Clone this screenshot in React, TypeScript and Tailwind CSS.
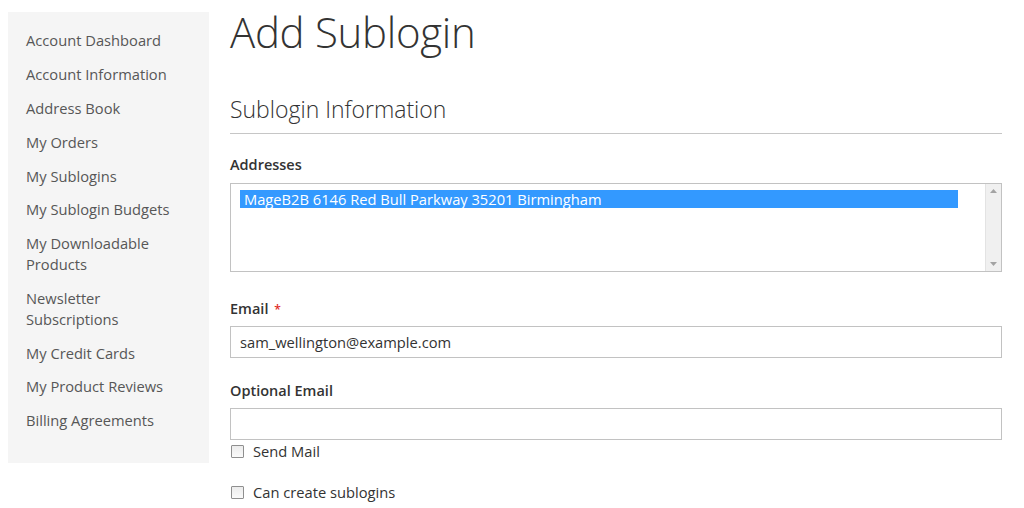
import React from "react";

const items: string[][] = [
  ["Account Dashboard"],
  ["Account Information"],
  ["Address Book"],
  ["My Orders"],
  ["My Sublogins"],
  ["My Sublogin Budgets"],
  ["My Downloadable", "Products"],
  ["Newsletter", "Subscriptions"],
  ["My Credit Cards"],
  ["My Product Reviews"],
  ["Billing Agreements"],
];

function Checkbox() {
  return (
    <span className="inline-block w-[13px] h-[13px] border border-[#8f8f8f] bg-gradient-to-b from-[#ececec] to-[#fafafa] rounded-[1px]" />
  );
}

export default function App() {
  return (
    <div
      className="w-[1024px] h-[508px] bg-white overflow-hidden flex text-[#333]"
      style={{ fontFamily: '"Open Sans", "Liberation Sans", sans-serif' }}
    >
      <div className="ml-[8px] mt-[12px] w-[201px] h-[451px] bg-[#f5f5f5] pt-[12px] pl-[18px] shrink-0">
        <ul className="flex flex-col">
          {items.map((it) => (
            <li key={it[0]} className="py-[6.4px] text-[14.7px] leading-[21px] text-[#575757]">
              {it.map((l) => (
                <div key={l}>{l}</div>
              ))}
            </li>
          ))}
        </ul>
      </div>
      <div className="ml-[21px] w-[772px] flex flex-col">
        <h1 className="text-[42px] font-light leading-[50px] mt-[7px] text-[#333] tracking-[-0.3px]">Add Sublogin</h1>
        <div className="mt-[37px] border-b border-[#c6c6c6] pb-[9px]">
          <h2 className="text-[23px] font-light leading-[30px] text-[#333]">Sublogin Information</h2>
        </div>
        <label className="mt-[21px] text-[14.5px] font-semibold leading-[20px]">Addresses</label>
        <div className="mt-[8px] h-[89px] border border-[#c2c2c2] flex">
          <div className="flex-1 pl-[9px] pt-[6px] pr-[27px]">
            <div className="bg-[#3399ff] text-white text-[14.7px] leading-[18px] pl-[4px]">
              MageB2B 6146 Red Bull Parkway 35201 Birmingham
            </div>
          </div>
          <div className="w-[16px] bg-[#f0f0f0] border-l border-[#e3e3e3] flex flex-col justify-between items-center py-[5px]">
            <svg width="7" height="4" viewBox="0 0 7 4"><path d="M0 4 L3.5 0 L7 4Z" fill="#a3a3a3" /></svg>
            <svg width="7" height="4" viewBox="0 0 7 4"><path d="M0 0 L3.5 4 L7 0Z" fill="#a3a3a3" /></svg>
          </div>
        </div>
        <label className="mt-[27px] text-[14.5px] font-semibold leading-[20px]">
          Email <span className="text-[#e02b27] text-[12px] ml-[2px]">*</span>
        </label>
        <div className="mt-[6px] h-[32px] border border-[#c2c2c2] flex items-center pl-[9px] text-[14.7px]">
          sam_wellington@example.com
        </div>
        <label className="mt-[23px] text-[14.5px] font-semibold leading-[20px]">Optional Email</label>
        <div className="mt-[7px] h-[32px] border border-[#c2c2c2]" />
        <div className="flex items-center mt-[1px] pl-[1px] gap-[9px] text-[14.7px] leading-[20px]">
          <Checkbox />
          <span>Send Mail</span>
        </div>
        <div className="flex items-center mt-[21px] pl-[1px] gap-[9px] text-[14.7px] leading-[20px]">
          <Checkbox />
          <span>Can create sublogins</span>
        </div>
      </div>
    </div>
  );
}
